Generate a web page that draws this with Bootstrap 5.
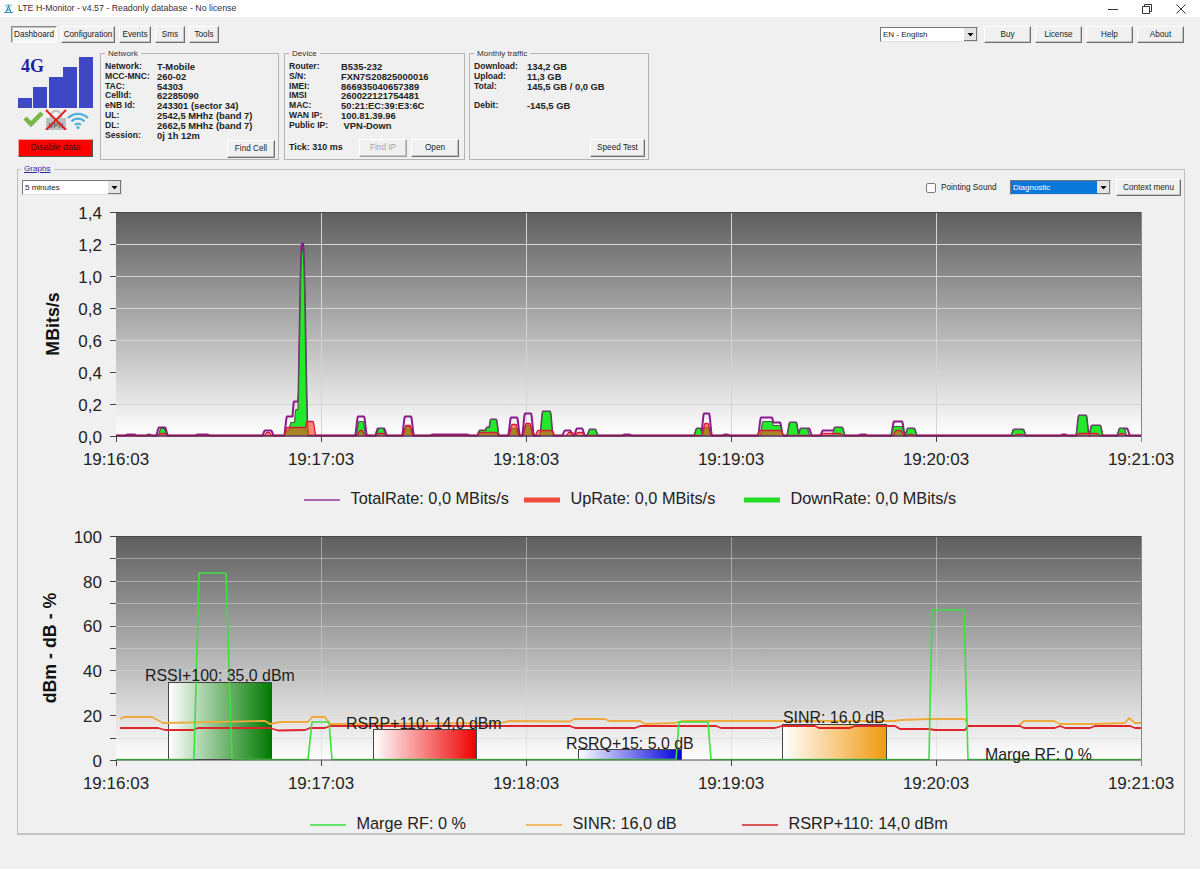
<!DOCTYPE html>
<html lang="en">
<head>
    <meta charset="UTF-8">
    <meta name="viewport" content="width=device-width, initial-scale=1">
    <title>LTE H-Monitor</title>
    <link href="https://cdn.jsdelivr.net/npm/bootstrap@5.3.0/dist/css/bootstrap.min.css" rel="stylesheet">
    <script src="https://cdn.jsdelivr.net/npm/bootstrap@5.3.0/dist/js/bootstrap.bundle.min.js"></script>
    <style>
        body {
            background-color: #f0f0f0;
            color: #222;
            font-family: "Liberation Sans", Arial, sans-serif;
            font-size: 8.2px;
            overflow: hidden;
        }
        .titlebar {
            height: 17px;
            background: #fff;
            font-size: 8.8px;
            padding-left: 3px;
            color: #333;
        }
        .win-ctl {
            width: 34px;
            text-align: center;
        }
        .win-ctls {
            margin-right: 2px;
        }
        .toolbar {
            padding: 9px 16px 0 11px;
            height: 30px;
        }
        .win-btn {
            height: 17px;
            padding: 0;
            font-size: 8.2px;
            line-height: 14px;
            color: #222;
            background: #f0f0f0;
            border-radius: 0;
            border: 1px solid;
            border-color: #fff #6f6f6f #6f6f6f #fff;
            box-shadow: inset -1px -1px 0 #c4c4c4;
        }
        .win-btn.is-on {
            border-color: #8a8a8a #fff #fff #8a8a8a;
            box-shadow: inset 1px 1px 0 #c4c4c4;
            background: #f6f6f6;
        }
        .win-btn:disabled {
            color: #a4a4a4;
            background: #f0f0f0;
            border-color: #fff #a0a0a0 #a0a0a0 #fff;
            opacity: 1;
        }
        .win-sel {
            height: 15px;
            padding: 0 16px 0 2px;
            font-size: 8px;
            line-height: 13px;
            color: #222;
            border-radius: 0;
            border: 1px solid;
            border-color: #777 #ddd #ddd #777;
            background-color: #fff;
            background-image: url("data:image/svg+xml,%3Csvg xmlns='http://www.w3.org/2000/svg' width='13' height='13'%3E%3Crect width='13' height='13' fill='%23e4e4e4'/%3E%3Cpath d='M0 12.5H13M12.5 0V13' stroke='%23777'/%3E%3Cpath d='M3.5 5h6L6.5 8.5z' fill='%23000'/%3E%3C/svg%3E");
            background-position: right center;
            background-repeat: no-repeat;
            background-size: 13px 13px;
        }
        .sel-blue {
            background-color: #0a78d8;
            color: #fff;
        }
        .info-row {
            height: 117px;
            padding-left: 17px;
        }
        .signal-box {
            width: 83px;
            padding-top: 9px;
        }
        .btn-disable {
            width: 75px;
            height: 18px;
            margin: 9px 0 0 1px;
            padding: 0;
            font-size: 9px;
            color: #4a0000;
            background: #fe0000;
            border-radius: 0;
            border: 1px solid;
            border-color: #ffa0a0 #555 #555 #ffa0a0;
        }
        .info-box {
            height: 113px;
            margin: 0;
            padding: 0 3px 2px 4px;
            border: 1px solid #b4b4b4;
            min-width: 0;
        }
        .info-box legend, .graph-box legend {
            float: none;
            width: auto;
            margin: 0;
            padding: 0 3px;
            font-size: 8.1px;
            line-height: 10px;
            color: #333;
        }
        .info-box legend { padding-top: 2px; }
        .box-net { width: 179px; margin-right: 5px; }
        .box-dev { width: 181px; margin-right: 4px; }
        .box-traffic { width: 180px; }
        .kv-grid {
            display: grid;
            padding-top: 3px;
            line-height: 9.8px;
            font-size: 8.6px;
            font-weight: bold;
            color: #222;
        }
        .kv-grid span:nth-child(even) { font-size: 9.4px; }
        .kv-net { grid-template-columns: 52px 1fr; }
        .kv-dev { grid-template-columns: 52px 1fr; }
        .kv-traffic { grid-template-columns: 53px 1fr; }
        .tick-label {
            font-size: 9px;
            font-weight: bold;
            width: 70px;
        }
        .graph-box {
            width: 1168px;
            height: 671px;
            margin: 0 0 0 17px;
            padding: 0;
            border: 1px solid #c0c0c0;
            border-bottom: 2px solid #c4c4c4;
            min-width: 0;
        }
        .graph-box legend {
            margin-left: 3px;
            color: #2a2aa8;
            text-decoration: underline;
        }
        .graph-bar {
            height: 17px;
            margin-top: 5px;
            padding: 0 3px 0 4px;
        }
        .chk-sound {
            width: 10px;
            height: 10px;
            margin: 0 5px 0 0;
            border-radius: 0;
            border-color: #777;
        }
        .chart-svg {
            display: block;
            font-family: "Liberation Sans", Arial, sans-serif;
        }
        .chart-low { margin-top: 14px; }
        .ax-label { font-size: 17px; fill: #222; }
        .ax-title { font-size: 17.8px; font-weight: bold; fill: #111; }
        .bar-label { font-size: 15.9px; fill: #1c1c1c; }
        .legend-row {
            padding: 8px 0 0 65px;
            font-size: 16.3px;
            line-height: 18px;
            color: #222;
        }
        .legend-item { flex: 0 0 auto; }
        .legend-wide { width: 220px; }
        .legend-narrow { width: 216px; }
        .swatch {
            display: inline-block;
            width: 36px;
            margin-right: 11px;
            vertical-align: middle;
        }
        .tab-dash { width: 46px; margin-right: 4px; }
        .tab-conf { width: 54px; margin-right: 4px; }
        .tab-evt { width: 32px; margin-right: 4px; }
        .tab-sms { width: 30px; margin-right: 4px; }
        .tab-tools { width: 30px; }
        .sel-lang { width: 98px; margin: 1px 2px 0 0; }
        .top-btn { width: 47px; }
        .box-btn { width: 48px; height: 18px; }
        .box-btn-wide { width: 55px; height: 18px; }
        .sel-time { width: 100px; }
        .sound-label { width: 69px; padding-top: 2px; }
        .sel-diag { width: 101px; margin-right: 5px; }
        .btn-ctx { width: 65px; }
    </style>
</head>
<body>
    <div class="titlebar d-flex align-items-center">
        <svg width="11" height="11" viewBox="0 0 11 11" class="me-1">
            <path d="M1 9.5h9M3 9.5 5.5 3 8 9.5M4 7h3" stroke="#3a8fc0" stroke-width="1.2" fill="none"/>
            <path d="M2 3.5Q5.5 0 9 3.5" stroke="#4fb0d8" fill="none"/>
        </svg>
        <span>LTE H-Monitor - v4.57 - Readonly database - No license</span>
        <div class="ms-auto d-flex win-ctls">
            <div class="win-ctl"><svg width="10" height="10"><path d="M0 5.5H10" stroke="#333"/></svg></div>
            <div class="win-ctl"><svg width="10" height="10"><path d="M.5 2.5h7v7h-7zM2.5 2.5v-2h7v7h-2" stroke="#333" fill="none"/></svg></div>
            <div class="win-ctl"><svg width="10" height="10"><path d="M.5.5l9 9M9.5.5l-9 9" stroke="#333"/></svg></div>
        </div>
    </div>

    <div class="toolbar d-flex align-items-start">
        <button class="btn win-btn is-on tab-dash">Dashboard</button>
        <button class="btn win-btn tab-conf">Configuration</button>
        <button class="btn win-btn tab-evt">Events</button>
        <button class="btn win-btn tab-sms">Sms</button>
        <button class="btn win-btn tab-tools">Tools</button>
        <div class="ms-auto d-flex gap-1 align-items-start">
            <select class="form-select win-sel sel-lang"><option>EN - English</option></select>
            <button class="btn win-btn top-btn">Buy</button>
            <button class="btn win-btn top-btn">License</button>
            <button class="btn win-btn top-btn">Help</button>
            <button class="btn win-btn top-btn">About</button>
        </div>
    </div>

    <div class="info-row d-flex align-items-start">
        <div class="signal-box">
            <svg width="78" height="74" viewBox="16 54 78 74" class="d-block">
                <g fill="#3f48c4">
                    <rect x="17" y="96" width="14" height="10"/>
                    <rect x="32" y="85" width="14" height="21"/>
                    <rect x="48" y="75" width="14" height="31"/>
                    <rect x="62" y="65" width="14" height="41"/>
                    <rect x="78" y="55" width="14" height="51"/>
                </g>
                <text x="20" y="70" font-family="Liberation Serif" font-weight="bold" font-size="18" fill="#1c22a8">4G</text>
                <path d="M24 116l6 6 11-11" stroke="#7ab648" stroke-width="4.5" fill="none"/>
                <rect x="45" y="116" width="20" height="12" fill="#bdbdbd"/>
                <path d="M50 116v-3a5 4 0 0 1 10 0v3" stroke="#bdbdbd" stroke-width="2" fill="none"/>
                <text x="55" y="126" text-anchor="middle" font-family="Liberation Sans" font-size="7" fill="#333">VPN</text>
                <path d="M45 108l20 20M65 108l-20 20" stroke="#e01a1a" stroke-width="1.8"/>
                <g stroke="#4fb0d8" stroke-width="2.2" fill="none">
                    <path d="M67 116a14 14 0 0 1 20 0"/>
                    <path d="M70.5 119.5a9 9 0 0 1 13 0"/>
                    <path d="M74 123a4 4 0 0 1 6 0"/>
                </g>
                <circle cx="77" cy="125.5" r="1.6" fill="#4fb0d8"/>
            </svg>
            <button class="btn btn-disable">Disable data</button>
        </div>

        <fieldset class="info-box box-net d-flex flex-column">
            <legend>Network</legend>
            <div class="kv-grid kv-net">
                <span>Network:</span><span>T-Mobile</span>
                <span>MCC-MNC:</span><span>260-02</span>
                <span>TAC:</span><span>54303</span>
                <span>CellId:</span><span>62285090</span>
                <span>eNB Id:</span><span>243301 (sector 34)</span>
                <span>UL:</span><span>2542,5 MHhz (band 7)</span>
                <span>DL:</span><span>2662,5 MHhz (band 7)</span>
                <span>Session:</span><span>0j 1h 12m</span>
            </div>
            <div class="mt-auto d-flex justify-content-end">
                <button class="btn win-btn box-btn">Find Cell</button>
            </div>
        </fieldset>

        <fieldset class="info-box box-dev d-flex flex-column">
            <legend>Device</legend>
            <div class="kv-grid kv-dev">
                <span>Router:</span><span>B535-232</span>
                <span>S/N:</span><span>FXN7S20825000016</span>
                <span>IMEI:</span><span>866935040657389</span>
                <span>IMSI</span><span>260022121754481</span>
                <span>MAC:</span><span>50:21:EC:39:E3:6C</span>
                <span>WAN IP:</span><span>100.81.39.96</span>
                <span>Public IP:</span><span>&nbsp;VPN-Down</span>
            </div>
            <div class="mt-auto d-flex align-items-center">
                <span class="tick-label">Tick: 310 ms</span>
                <button class="btn win-btn box-btn me-1" disabled>Find IP</button>
                <button class="btn win-btn box-btn">Open</button>
            </div>
        </fieldset>

        <fieldset class="info-box box-traffic d-flex flex-column">
            <legend>Monthly traffic</legend>
            <div class="kv-grid kv-traffic">
                <span>Download:</span><span>134,2 GB</span>
                <span>Upload:</span><span>11,3 GB</span>
                <span>Total:</span><span>145,5 GB / 0,0 GB</span>
                <span>&nbsp;</span><span>&nbsp;</span>
                <span>Debit:</span><span>-145,5 GB</span>
            </div>
            <div class="mt-auto d-flex justify-content-end">
                <button class="btn win-btn box-btn-wide">Speed Test</button>
            </div>
        </fieldset>
    </div>

    <fieldset class="graph-box">
        <legend>Graphs</legend>
        <div class="graph-bar d-flex align-items-center">
            <select class="form-select win-sel sel-time"><option>5 minutes</option></select>
            <div class="ms-auto d-flex align-items-center">
                <input type="checkbox" class="form-check-input chk-sound">
                <span class="sound-label">Pointing Sound</span>
                <select class="form-select win-sel sel-blue sel-diag"><option>Diagnostic</option></select>
                <button class="btn win-btn btn-ctx">Context menu</button>
            </div>
        </div>

        <svg class="chart-svg" id="chart1" width="1166" height="285" viewBox="18 197 1166 285">
            <defs>
                <linearGradient id="plotBg" x1="0" y1="0" x2="0" y2="1">
                    <stop offset="0" stop-color="#5e5e5e"/>
                    <stop offset="1" stop-color="#ffffff"/>
                </linearGradient>
                <linearGradient id="gGreen"><stop offset="0" stop-color="#fff"/><stop offset="1" stop-color="#007a00"/></linearGradient>
                <linearGradient id="gRed"><stop offset="0" stop-color="#fff"/><stop offset="1" stop-color="#ee0000"/></linearGradient>
                <linearGradient id="gBlue"><stop offset="0" stop-color="#fff"/><stop offset="1" stop-color="#0000dd"/></linearGradient>
                <linearGradient id="gOrange"><stop offset="0" stop-color="#fff"/><stop offset="1" stop-color="#f09a10"/></linearGradient>
            </defs>
        </svg>
        <div class="legend-row d-flex justify-content-center">
            <div class="legend-item legend-wide"><svg class="swatch" height="6"><path d="M0 3H36" stroke="#9a3a9a" stroke-width="1.5"/></svg>TotalRate: 0,0 MBits/s</div>
            <div class="legend-item legend-wide"><svg class="swatch" height="6"><path d="M0 3H36" stroke="#f04a3a" stroke-width="5"/></svg>UpRate: 0,0 MBits/s</div>
            <div class="legend-item legend-wide"><svg class="swatch" height="6"><path d="M0 3H36" stroke="#22dd22" stroke-width="5"/></svg>DownRate: 0,0 MBits/s</div>
        </div>

        <svg class="chart-svg chart-low" id="chart2" width="1166" height="285" viewBox="18 522 1166 285"></svg>
        <div class="legend-row d-flex justify-content-center">
            <div class="legend-item legend-narrow"><svg class="swatch" height="6"><path d="M0 3H36" stroke="#3ee03e" stroke-width="1.5"/></svg>Marge RF: 0 %</div>
            <div class="legend-item legend-narrow"><svg class="swatch" height="6"><path d="M0 3H36" stroke="#f0aa3c" stroke-width="1.5"/></svg>SINR: 16,0 dB</div>
            <div class="legend-item legend-narrow"><svg class="swatch" height="6"><path d="M0 3H36" stroke="#d8202a" stroke-width="1.5"/></svg>RSRP+110: 14,0 dBm</div>
        </div>
    </fieldset>

    <script>
        const NS = "http://www.w3.org/2000/svg";
        const LEFT = 116, RIGHT = 1141;

        function add(svg, tag, attrs, text) {
            let el = document.createElementNS(NS, tag);
            for (let k in attrs) el.setAttribute(k, attrs[k]);
            if (text) el.textContent = text;
            svg.appendChild(el);
            return el;
        }

        // plot background, grid, ticks and axis labels shared by both charts
        function frame(svg, top, bottom, yLabels, yStep, title, titleX, gridAlpha) {
            add(svg, "rect", { x: LEFT, y: top, width: RIGHT - LEFT, height: bottom - top, fill: "url(#plotBg)" });
            for (let y = bottom - yStep; y > top + 1; y -= yStep) {
                add(svg, "path", { d: `M${LEFT} ${Math.round(y) + .5}H${RIGHT}`, stroke: "#d4d4d4", "stroke-opacity": gridAlpha });
            }
            for (let y = bottom; y > top - 1; y -= yStep) {
                add(svg, "path", { d: `M110 ${Math.round(y) + .5}H${LEFT}`, stroke: "#444" });
            }
            for (let i = 0; i < 6; i++) {
                let x = LEFT + i * 205;
                if (i > 0 && i < 5) add(svg, "path", { d: `M${x + .5} ${top}V${bottom}`, stroke: "#d4d4d4", "stroke-opacity": gridAlpha });
                add(svg, "path", { d: `M${x + .5} ${bottom}v6`, stroke: "#444" });
                add(svg, "text", { x: x, y: bottom + 29, "text-anchor": "middle", class: "ax-label" }, `19:${16 + i}:03`);
            }
            add(svg, "path", { d: `M${LEFT} ${top + .5}H${RIGHT}`, stroke: "#4a4a4a" });
            add(svg, "path", { d: `M${RIGHT + .5} ${top}V${bottom + 6}`, stroke: "#888" });
            yLabels.forEach(function (l) {
                add(svg, "text", { x: 102, y: l[1] + 6.5, "text-anchor": "end", class: "ax-label" }, l[0]);
            });
            let mid = (top + bottom) / 2;
            add(svg, "text", { x: titleX, y: mid, "text-anchor": "middle", class: "ax-title", transform: `rotate(-90 ${titleX} ${mid})` }, title);
        }

        // bumps are [x0, x1, height, ramp]: a trapezoid with an eased ramp on each side, 3px by default
        function heights(bumps) {
            let out = [];
            for (let x = LEFT; x <= RIGHT; x += .5) {
                let h = 0;
                bumps.forEach(function (b) {
                    let r = b[3] || 3;
                    let v = Math.min(1, (x - b[0]) / r, (b[1] - x) / r);
                    if (v > 0) h = Math.max(h, v * v * (3 - 2 * v) * b[2]);
                });
                out.push(h);
            }
            return out;
        }

        function areaPath(bumps, base) {
            let d = `M${LEFT} ${base}`;
            heights(bumps).forEach(function (h, i) {
                d += `L${LEFT + i / 2} ${(base - h).toFixed(1)}`;
            });
            return d;
        }

        const down = [[158, 167, 7], [284, 302, 5], [288, 301, 13], [293, 301, 26], [297, 308, 186, 5],
            [356, 366, 14], [376, 386, 7], [403, 413, 9], [477, 490, 5], [484, 494, 8], [488, 499, 16],
            [509, 519, 7], [523, 533, 10], [540, 553, 24], [587, 598, 6], [694, 703, 7], [702, 711, 8],
            [760, 775, 14], [770, 783, 10], [787, 799, 13], [798, 810, 7], [832, 845, 8],
            [891, 905, 9], [905, 917, 7], [1011, 1026, 6], [1076, 1089, 20], [1089, 1103, 10], [1117, 1127, 7]];
        const up = [[158, 167, 2], [264, 272, 3], [284, 312, 8], [304, 316, 14], [357, 365, 5], [376, 386, 2],
            [403, 413, 10], [477, 499, 3], [509, 519, 11], [523, 533, 12], [535, 555, 5], [566, 575, 3],
            [575, 585, 3], [702, 711, 12], [757, 784, 5], [820, 843, 2], [893, 904, 5], [906, 915, 1],
            [1014, 1025, 1], [1076, 1100, 2], [1118, 1126, 2]];
        const total = [[125, 137, 1], [146, 152, 1], [156, 168, 8], [195, 210, 1], [262, 274, 5], [284, 302, 19], [291, 301, 34], [297, 308, 192, 5],
            [355, 367, 19], [375, 387, 7], [402, 414, 19], [430, 470, 1], [477, 490, 5], [484, 494, 8], [488, 499, 16],
            [508, 520, 18], [522, 534, 22], [540, 553, 24], [562, 573, 5], [574, 585, 7], [587, 598, 6], [622, 632, 1],
            [694, 703, 7], [701, 712, 22], [722, 730, 1], [758, 775, 18], [770, 783, 13], [787, 799, 13], [798, 812, 7],
            [820, 843, 5], [832, 845, 8], [858, 868, 1], [891, 905, 14], [905, 917, 7], [1011, 1026, 6], [1060, 1068, 1],
            [1076, 1089, 20], [1089, 1103, 10], [1117, 1130, 7]];

        let c1 = document.getElementById("chart1");
        frame(c1, 213, 437, [["1,4", 213], ["1,2", 245], ["1,0", 277], ["0,8", 309], ["0,6", 341], ["0,4", 373], ["0,2", 405], ["0,0", 437]], 32, "MBits/s", 59, 1);
        add(c1, "path", { d: areaPath(total, 436.5), fill: "none", stroke: "#8a1a8a", "stroke-width": 2, "stroke-linejoin": "round" });
        add(c1, "path", { d: areaPath(down, 436.5), fill: "#22ea2a", stroke: "#4a5a4a", "stroke-width": 1.2, "stroke-linejoin": "round" });
        add(c1, "path", { d: areaPath(up, 436.5), fill: "rgba(250,70,30,.62)", stroke: "#d81840", "stroke-width": 1.3, "stroke-linejoin": "round" });
        add(c1, "path", { d: `M${LEFT} 437H${RIGHT}`, stroke: "#5a2a5a", "stroke-width": 1.5 });

        let c2 = document.getElementById("chart2");
        frame(c2, 537, 761, [["100", 537], ["80", 582], ["60", 626], ["40", 671], ["20", 716], ["0", 761]], 22.4, "dBm - dB - %", 56, .55);

        [[168, 683, 103, 78, "gGreen"], [373, 730, 103, 31, "gRed"], [578, 750, 103, 11, "gBlue"], [782, 725, 104, 36, "gOrange"]].forEach(function (b) {
            add(c2, "rect", { x: b[0] + .5, y: b[1] + .5, width: b[2], height: b[3] - 1, fill: `url(#${b[4]})`, stroke: "#444" });
        });

        function line(svg, pts, color, w) {
            add(svg, "polyline", { points: pts.map(p => p.join(",")).join(" "), fill: "none", stroke: color, "stroke-width": w, "stroke-linejoin": "round" });
        }
        line(c2, [[120, 720], [124, 718], [152, 718], [163, 724], [265, 722], [270, 725], [280, 723], [308, 723], [312, 718], [325, 718], [330, 725], [500, 724], [510, 722], [570, 722.5], [574, 720], [605, 720], [609, 722], [640, 722], [645, 725], [675, 724], [682, 722], [895, 722], [900, 721], [929, 720], [965, 720], [968, 727], [1018, 727], [1024, 722], [1054, 722], [1060, 725], [1093, 725], [1125, 724], [1129, 719], [1135, 724], [1141, 724]], "#f0aa3c", 1.8);
        line(c2, [[120, 729], [158, 729], [165, 731], [193, 731], [198, 729], [270, 729], [278, 731.5], [305, 731], [310, 729], [325, 729], [330, 727], [570, 727], [575, 729], [635, 729], [640, 727], [716, 727], [721, 729], [775, 729], [782, 727], [815, 727], [819, 729], [850, 729], [855, 727], [895, 727], [900, 730], [929, 730], [935, 731], [965, 731], [968, 727], [1020, 727], [1024, 729], [1055, 729], [1060, 727], [1065, 729], [1090, 729], [1095, 727], [1130, 727], [1135, 729], [1141, 729]], "#e0242c", 1.8);
        line(c2, [[116, 760.5], [194, 760.5], [199, 574], [226, 574], [232, 760.5], [308, 760.5], [312, 723], [329, 723], [332, 760.5], [676, 760.5], [679, 723], [708, 723], [711, 760.5], [929, 760.5], [932, 611], [964, 611], [968, 760.5], [RIGHT, 760.5]], "#3ee03e", 1.6);
        add(c2, "path", { d: `M${LEFT} 761H${RIGHT}`, stroke: "#4a4a4a" });

        [["RSSI+100: 35,0 dBm", 145, 682], ["RSRP+110: 14,0 dBm", 346, 730], ["RSRQ+15: 5,0 dB", 566, 750], ["SINR: 16,0 dB", 783, 724], ["Marge RF: 0 %", 985, 761]].forEach(function (t) {
            add(c2, "text", { x: t[1], y: t[2], class: "bar-label" }, t[0]);
        });
    </script>
</body>
</html>
